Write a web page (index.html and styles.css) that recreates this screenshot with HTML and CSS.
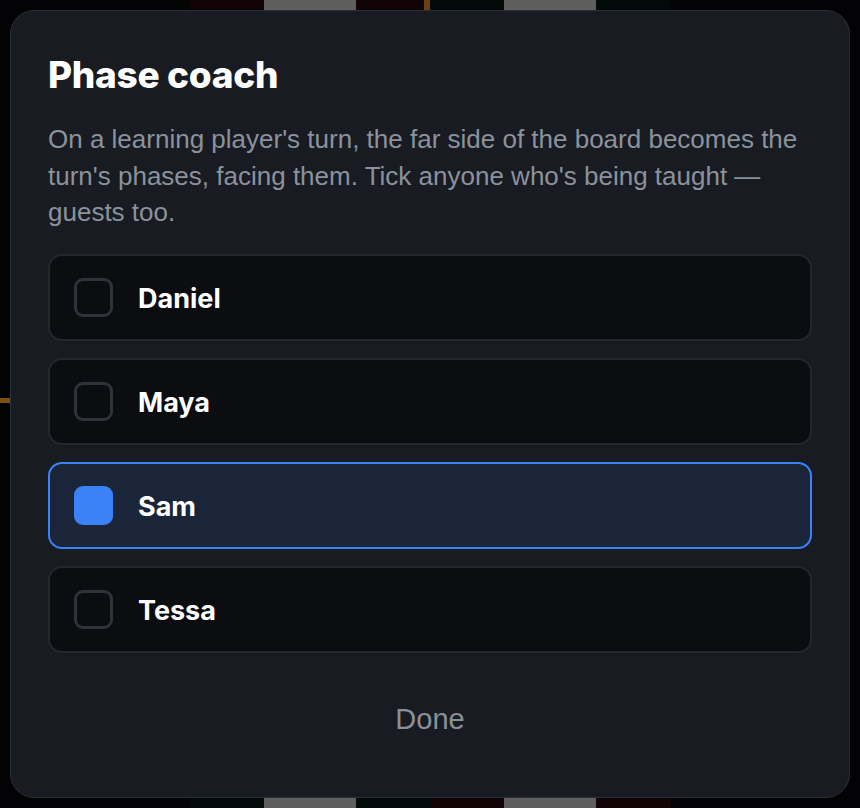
FILE: index.html
```html
<!DOCTYPE html>
<html lang="en">
  <head>
    <meta charset="UTF-8" />
    <meta name="viewport" content="width=device-width, initial-scale=1.0" />
    <title>Phase coach</title>
    <link rel="stylesheet" href="styles.css">
  </head>
  <body>
    <div class="board">
      <div class="tile tile-red" style="left:190px;top:0;width:74px"></div>
      <div class="tile tile-gray" style="left:264px;top:0;width:92px"></div>
      <div class="tile tile-red" style="left:356px;top:0;width:68px"></div>
      <div class="tile tile-gold" style="left:424px;top:0;width:6px"></div>
      <div class="tile tile-green" style="left:430px;top:0;width:74px"></div>
      <div class="tile tile-gray" style="left:504px;top:0;width:92px"></div>
      <div class="tile tile-green" style="left:596px;top:0;width:74px"></div>
      <div class="tile tile-green" style="left:190px;bottom:0;width:74px"></div>
      <div class="tile tile-gray" style="left:264px;bottom:0;width:92px"></div>
      <div class="tile tile-green" style="left:356px;bottom:0;width:76px"></div>
      <div class="tile tile-red" style="left:432px;bottom:0;width:72px"></div>
      <div class="tile tile-gray" style="left:504px;bottom:0;width:92px"></div>
      <div class="tile tile-red" style="left:596px;bottom:0;width:75px"></div>
      <div class="side-mark"></div>
    </div>

    <div class="dialog">
      <h2>Phase coach</h2>
      <p class="dialog-text">On a learning player's turn, the far side of the board becomes the turn's phases, facing them. Tick anyone who's being taught — guests too.</p>
      <div class="player-list">
        <label class="player-row">
          <span class="check"></span>
          <span class="player-name">Daniel</span>
        </label>
        <label class="player-row">
          <span class="check"></span>
          <span class="player-name">Maya</span>
        </label>
        <label class="player-row checked">
          <span class="check"></span>
          <span class="player-name">Sam</span>
        </label>
        <label class="player-row">
          <span class="check"></span>
          <span class="player-name">Tessa</span>
        </label>
      </div>
      <button class="done-btn">Done</button>
    </div>
  </body>
</html>
```

FILE: styles.css
```css
body {
  margin: 0;
  height: 100vh;
  background-color: #030305;
  font-family: "Liberation Sans", Arial, sans-serif;
  overflow: hidden;
}
.board {
  position: fixed;
  top: 0;
  left: 0;
  width: 100%;
  height: 100%;
}
.tile {
  position: absolute;
  height: 10px;
}
.tile-red {
  background-color: #100406;
}
.tile-green {
  background-color: #020a0a;
}
.tile-gray {
  background-color: #5e5e5e;
}
.tile-gold {
  background-color: #6b4010;
}
.side-mark {
  position: absolute;
  left: 0;
  top: 398px;
  width: 10px;
  height: 5px;
  background-color: #7a4f10;
}
.dialog {
  position: relative;
  box-sizing: border-box;
  display: flex;
  flex-direction: column;
  margin: 10px;
  height: 788px;
  padding: 42px 37px 0;
  background-color: #181b22;
  border: 1px solid #2b2f37;
  border-radius: 24px;
}
.dialog h2 {
  margin: 0;
  font-family: Inter, "Liberation Sans", sans-serif;
  font-weight: 800;
  font-size: 37px;
  line-height: 43px;
  letter-spacing: -0.3px;
  color: #ffffff;
}
.dialog-text {
  margin: 25px 0 0;
  font-size: 26px;
  line-height: 36.5px;
  color: #8b929c;
}
.player-list {
  display: flex;
  flex-direction: column;
  gap: 17px;
  margin-top: 23px;
}
.player-row {
  box-sizing: border-box;
  display: flex;
  align-items: center;
  gap: 25px;
  height: 87px;
  padding: 0 24px;
  background-color: #0b0d11;
  border: 2px solid #24272e;
  border-radius: 14px;
  cursor: pointer;
}
.check {
  box-sizing: border-box;
  width: 39px;
  height: 39px;
  border: 3px solid #2e3239;
  border-radius: 9px;
}
.player-name {
  padding-top: 3px;
  font-family: Inter, "Liberation Sans", sans-serif;
  font-weight: 700;
  font-size: 27px;
  color: #ffffff;
}
.player-row.checked {
  background-color: #1b2539;
  border-color: #3b82f6;
}
.player-row.checked .check {
  background-color: #3b82f6;
  border-color: #3b82f6;
}
.done-btn {
  align-self: center;
  margin-top: 36px;
  padding: 14px 24px;
  background: none;
  border: none;
  font-family: "Liberation Sans", Arial, sans-serif;
  font-size: 29px;
  line-height: 32px;
  color: #8a909a;
  cursor: pointer;
}
```
